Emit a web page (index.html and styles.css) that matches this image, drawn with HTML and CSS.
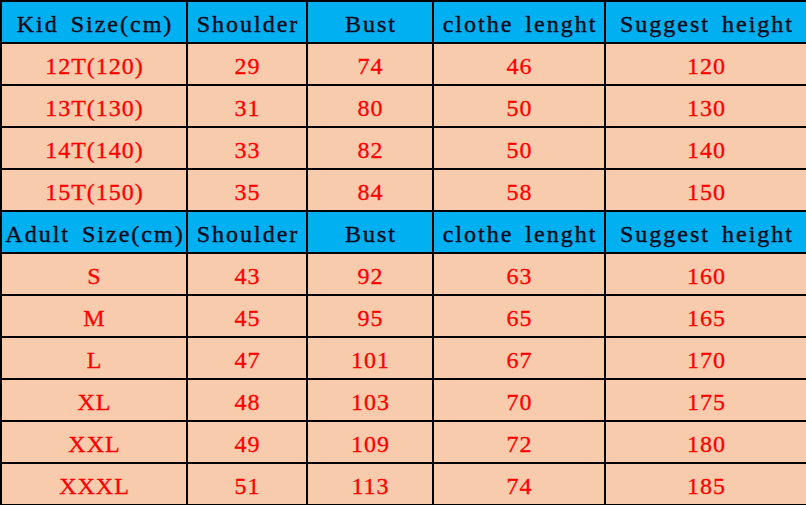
FILE: index.html
```html
<!DOCTYPE html>
<html>
<head>
<meta charset="utf-8">
<link rel="stylesheet" href="styles.css">
</head>
<body>
<table class="size-table">
  <colgroup>
    <col class="c1"><col class="c2"><col class="c3"><col class="c4"><col class="c5">
  </colgroup>
  <tr class="head"><td>Kid Size(cm)</td><td>Shoulder</td><td>Bust</td><td>clothe lenght</td><td>Suggest height</td></tr>
  <tr class="row"><td>12T(120)</td><td>29</td><td>74</td><td>46</td><td>120</td></tr>
  <tr class="row"><td>13T(130)</td><td>31</td><td>80</td><td>50</td><td>130</td></tr>
  <tr class="row"><td>14T(140)</td><td>33</td><td>82</td><td>50</td><td>140</td></tr>
  <tr class="row"><td>15T(150)</td><td>35</td><td>84</td><td>58</td><td>150</td></tr>
  <tr class="head"><td>Adult Size(cm)</td><td>Shoulder</td><td>Bust</td><td>clothe lenght</td><td>Suggest height</td></tr>
  <tr class="row"><td>S</td><td>43</td><td>92</td><td>63</td><td>160</td></tr>
  <tr class="row"><td>M</td><td>45</td><td>95</td><td>65</td><td>165</td></tr>
  <tr class="row"><td>L</td><td>47</td><td>101</td><td>67</td><td>170</td></tr>
  <tr class="row"><td>XL</td><td>48</td><td>103</td><td>70</td><td>175</td></tr>
  <tr class="row"><td>XXL</td><td>49</td><td>109</td><td>72</td><td>180</td></tr>
  <tr class="row"><td>XXXL</td><td>51</td><td>113</td><td>74</td><td>185</td></tr>
</table>
</body>
</html>
```
FILE: styles.css
```css
html, body {
  margin: 0;
  padding: 0;
  background: #ffffff;
}
.size-table {
  border-collapse: collapse;
  table-layout: fixed;
  width: 806px;
  font-family: "Liberation Serif", "Times New Roman", serif;
  font-size: 24px;
}
.c1 { width: 186px; }
.c2 { width: 120px; }
.c3 { width: 126px; }
.c4 { width: 172px; }
.c5 { width: 202px; }
.size-table td {
  border: 2px solid #000;
  height: 42px;
  box-sizing: border-box;
  padding: 3px 0 0 0;
  text-align: center;
  vertical-align: middle;
  white-space: nowrap;
  overflow: hidden;
  line-height: 1;
}
.head td {
  background: #00b0f0;
  color: #0a0a1a;
  letter-spacing: 2px;
  word-spacing: 4px;
  padding-left: 2px;
  -webkit-text-stroke: 0.4px #0a0a1a;
}
.row td {
  background: #f8cbad;
  color: #ff0000;
  letter-spacing: 1px;
  padding-left: 1px;
  -webkit-text-stroke: 0.3px #ff0000;
}
```
